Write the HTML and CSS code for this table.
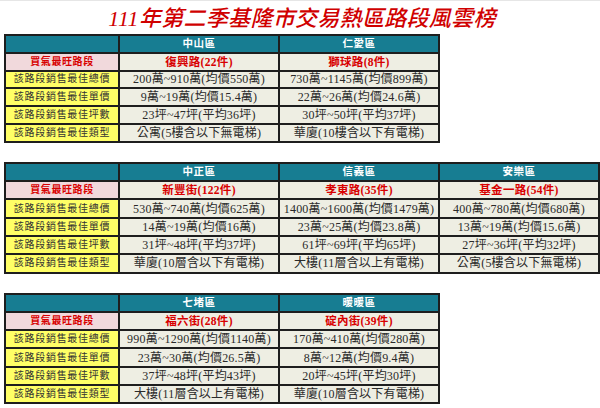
FILE: index.html
```html
<!DOCTYPE html>
<html lang="zh-Hant">
<head>
<meta charset="utf-8">
<title>111年第二季基隆市交易熱區路段風雲榜</title>
<link rel="stylesheet" href="styles.css">
</head>
<body>
<div class="page">
  <h1 class="title">111年第二季基隆市交易熱區路段風雲榜</h1>

  <table class="board board-2 board-first">
    <colgroup><col class="c-label"><col class="c-data"><col class="c-data"></colgroup>
    <tr class="r-head"><th></th><th>中山區</th><th>仁愛區</th></tr>
    <tr class="r-road"><td class="lbl-pink">買氣最旺路段</td><td>復興路(22件)</td><td>獅球路(8件)</td></tr>
    <tr><td class="lbl">該路段銷售最佳總價</td><td>200萬~910萬(均價550萬)</td><td>730萬~1145萬(均價899萬)</td></tr>
    <tr><td class="lbl">該路段銷售最佳單價</td><td>9萬~19萬(均價15.4萬)</td><td>22萬~26萬(均價24.6萬)</td></tr>
    <tr><td class="lbl">該路段銷售最佳坪數</td><td>23坪~47坪(平均36坪)</td><td>30坪~50坪(平均37坪)</td></tr>
    <tr><td class="lbl">該路段銷售最佳類型</td><td>公寓(5樓含以下無電梯)</td><td>華廈(10樓含以下有電梯)</td></tr>
  </table>

  <table class="board board-3">
    <colgroup><col class="c-label"><col class="c-data"><col class="c-data"><col class="c-data"></colgroup>
    <tr class="r-head"><th></th><th>中正區</th><th>信義區</th><th>安樂區</th></tr>
    <tr class="r-road"><td class="lbl-pink">買氣最旺路段</td><td>新豐街(122件)</td><td>孝東路(35件)</td><td>基金一路(54件)</td></tr>
    <tr><td class="lbl">該路段銷售最佳總價</td><td>530萬~740萬(均價625萬)</td><td>1400萬~1600萬(均價1479萬)</td><td>400萬~780萬(均價680萬)</td></tr>
    <tr><td class="lbl">該路段銷售最佳單價</td><td>14萬~19萬(均價16萬)</td><td>23萬~25萬(均價23.8萬)</td><td>13萬~19萬(均價15.6萬)</td></tr>
    <tr><td class="lbl">該路段銷售最佳坪數</td><td>31坪~48坪(平均37坪)</td><td>61坪~69坪(平均65坪)</td><td>27坪~36坪(平均32坪)</td></tr>
    <tr><td class="lbl">該路段銷售最佳類型</td><td>華廈(10層含以下有電梯)</td><td>大樓(11層含以上有電梯)</td><td>公寓(5樓含以下無電梯)</td></tr>
  </table>

  <table class="board board-2">
    <colgroup><col class="c-label"><col class="c-data"><col class="c-data"></colgroup>
    <tr class="r-head"><th></th><th>七堵區</th><th>暖暖區</th></tr>
    <tr class="r-road"><td class="lbl-pink">買氣最旺路段</td><td>福六街(28件)</td><td>碇內街(39件)</td></tr>
    <tr><td class="lbl">該路段銷售最佳總價</td><td>990萬~1290萬(均價1140萬)</td><td>170萬~410萬(均價280萬)</td></tr>
    <tr><td class="lbl">該路段銷售最佳單價</td><td>23萬~30萬(均價26.5萬)</td><td>8萬~12萬(均價9.4萬)</td></tr>
    <tr><td class="lbl">該路段銷售最佳坪數</td><td>37坪~48坪(平均43坪)</td><td>20坪~45坪(平均30坪)</td></tr>
    <tr><td class="lbl">該路段銷售最佳類型</td><td>大樓(11層含以上有電梯)</td><td>華廈(10層含以下有電梯)</td></tr>
  </table>
</div>
</body>
</html>
```

FILE: styles.css
```css
html, body {
  margin: 0;
  padding: 0;
  background: #ffffff;
}

body {
  font-family: "Liberation Serif", "Noto Sans CJK TC", serif;
  color: #2a2a2a;
}

.page {
  width: 600px;
  height: 408px;
  padding: 0 0 0 4px;
  box-sizing: border-box;
  display: flex;
  flex-direction: column;
  border-top: 1px solid #e6e6e6;
  overflow: hidden;
}

.title {
  margin: 0;
  height: 33px;
  padding-top: 7px;
  box-sizing: border-box;
  width: 596px;
  text-align: center;
  font-family: "Liberation Serif", "Noto Sans CJK TC", serif;
  font-style: italic;
  font-weight: 500;
  font-size: 22px;
  line-height: 22px;
  color: #d00000;
  letter-spacing: 0.3px;
}

.board {
  border-collapse: collapse;
  table-layout: fixed;
  margin-top: 19px;
}

.board-first {
  margin-top: 0;
}

.board-2 { width: 434px; }
.board-3 { width: 593px; }

.c-label { width: 114px; }
.c-data { width: 160px; }

.board th,
.board td {
  border: 2px solid #1e1e1e;
  height: 16.3px;
  padding: 0;
  text-align: center;
  vertical-align: middle;
  font-size: 12px;
  line-height: 14px;
  letter-spacing: 0.2px;
  white-space: nowrap;
  overflow: hidden;
  background: #eeeee3;
}

.board-first th,
.board-first td {
  height: 15.8px;
}

.board .r-head th {
  background: #177d92;
  color: #ffffff;
  font-weight: 700;
  font-size: 10.5px;
  letter-spacing: 0.5px;
}

.board .r-road td {
  color: #d80000;
  font-weight: 700;
  font-size: 11.5px;
  letter-spacing: 0.3px;
}

.board .r-road td.lbl-pink {
  background: #f1d9dc;
  font-size: 10px;
  letter-spacing: 0.6px;
}

.board td.lbl {
  background: #ffff66;
  color: #333333;
  letter-spacing: 0.7px;
  font-size: 10px;
}
```
